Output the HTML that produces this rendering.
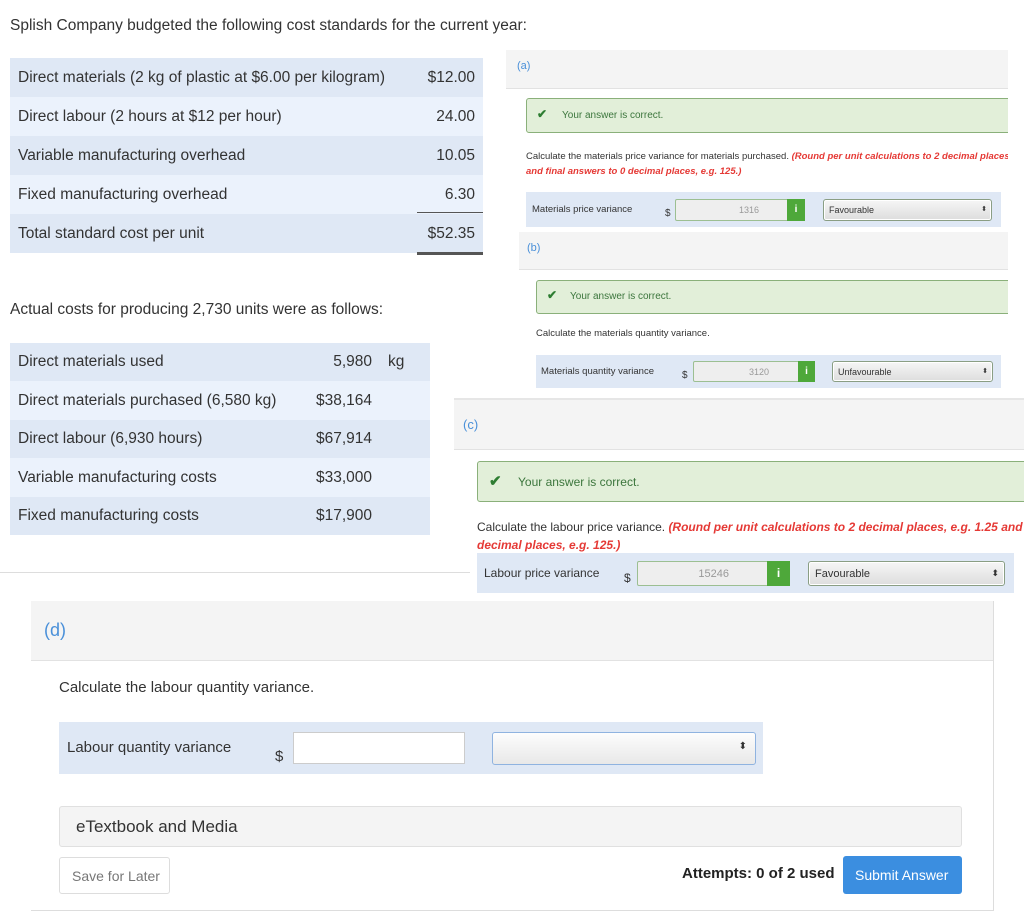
<!DOCTYPE html>
<html><head><meta charset="utf-8"><style>
*{margin:0;padding:0;box-sizing:border-box}
html,body{overflow:hidden}
body{width:1024px;height:919px;background:#fff;position:relative;overflow:hidden;font-family:"Liberation Sans",sans-serif;color:#333}
.a{position:absolute;white-space:nowrap}
.clip{position:absolute;overflow:hidden}
.d{background:#dfe8f5}.l{background:#ebf2fc}
.row .t{position:absolute;left:8px;top:50%;transform:translateY(-50%);font-size:15.5px;color:#333}
.row .v{position:absolute;top:50%;transform:translateY(-50%);font-size:15.5px;color:#333;text-align:right}
.panel{background:#f4f4f4;border-bottom:1px solid #e2e2e2}
.lbl{color:#4a90d9}
.ok{background:#e2efd9;border:1px solid #8ab07a;border-radius:3px;color:#3c763d}
.chk{color:#2e7d32;font-weight:bold}
.inp{background:#eee;border:1px solid #9cbf92;border-radius:2px}
.ibtn{background:#4ea83a;color:#fff;font-weight:bold;text-align:center}
.sel{border:1px solid #8a9e84;border-radius:3px;background:linear-gradient(#f6f6f6,#ddd);box-shadow:inset 0 0 0 1px #fff}
.red{color:#e53935;font-weight:bold;font-style:italic}
</style></head><body>
<div class="a" style="left:10px;top:17px;font-size:15.5px">Splish Company budgeted the following cost standards for the current year:</div>

<div class="a row d" style="left:10px;top:58px;width:473px;height:39px"><span class="t">Direct materials (2 kg of plastic at $6.00 per kilogram)</span><span class="v" style="right:8px">$12.00</span></div>
<div class="a row l" style="left:10px;top:97px;width:473px;height:39px"><span class="t">Direct labour (2 hours at $12 per hour)</span><span class="v" style="right:8px">24.00</span></div>
<div class="a row d" style="left:10px;top:136px;width:473px;height:39px"><span class="t">Variable manufacturing overhead</span><span class="v" style="right:8px">10.05</span></div>
<div class="a row l" style="left:10px;top:175px;width:473px;height:39px"><span class="t">Fixed manufacturing overhead</span><span class="v" style="right:8px">6.30</span></div>
<div class="a row d" style="left:10px;top:214px;width:473px;height:39px"><span class="t">Total standard cost per unit</span><span class="v" style="right:8px">$52.35</span></div>
<div class="a" style="left:417px;top:212px;width:66px;height:1px;background:#555"></div>
<div class="a" style="left:417px;top:252px;width:66px;height:3px;background:#555"></div>

<div class="a" style="left:10px;top:301px;font-size:15.5px">Actual costs for producing 2,730 units were as follows:</div>
<div class="a row d" style="left:10px;top:343px;width:420px;height:38px"><span class="t">Direct materials used</span><span class="v" style="right:58px">5,980</span><span class="v" style="left:378px">kg</span></div>
<div class="a row l" style="left:10px;top:381px;width:420px;height:39px"><span class="t">Direct materials purchased (6,580 kg)</span><span class="v" style="right:58px">$38,164</span></div>
<div class="a row d" style="left:10px;top:420px;width:420px;height:38px"><span class="t">Direct labour (6,930 hours)</span><span class="v" style="right:58px">$67,914</span></div>
<div class="a row l" style="left:10px;top:458px;width:420px;height:39px"><span class="t">Variable manufacturing costs</span><span class="v" style="right:58px">$33,000</span></div>
<div class="a row d" style="left:10px;top:497px;width:420px;height:38px"><span class="t">Fixed manufacturing costs</span><span class="v" style="right:58px">$17,900</span></div>
<div class="a" style="left:0;top:572px;width:470px;height:1px;background:#ddd"></div>

<!-- (a)/(b) clipped region -->
<div class="clip" style="left:500px;top:45px;width:508px;height:350px">
<div class="a panel" style="left:6px;top:5px;width:502px;height:39px"><span class="a lbl" style="left:11px;top:10px;font-size:11px">(a)</span></div>
<div class="a ok" style="left:26px;top:53px;width:500px;height:35px"><span class="a chk" style="left:10px;top:8px;font-size:12px">✔</span><span class="a" style="left:35px;top:11px;font-size:10px">Your answer is correct.</span></div>
<div class="a" style="left:26px;top:106px;font-size:9.5px">Calculate the materials price variance for materials purchased. <span class="red">(Round per unit calculations to 2 decimal places</span></div>
<div class="a red" style="left:26px;top:121px;font-size:9.5px">and final answers to 0 decimal places, e.g. 125.)</div>
<div class="a d" style="left:26px;top:147px;width:475px;height:35px"></div>
<div class="a" style="left:32px;top:159px;font-size:9.5px">Materials price variance</div>
<div class="a" style="left:165px;top:163px;font-size:10px">$</div>
<div class="a inp" style="left:175px;top:154px;width:130px;height:22px"><span class="a" style="right:45px;top:5px;font-size:9px;color:#999">1316</span></div>
<div class="a ibtn" style="left:287px;top:154px;width:18px;height:22px;font-size:10px;line-height:22px">i</div>
<div class="a sel" style="left:323px;top:154px;width:169px;height:22px"><span class="a" style="left:5px;top:5px;font-size:9px">Favourable</span><span class="a" style="right:4px;top:5px;font-size:7px">⬍</span></div>

<div class="a panel" style="left:19px;top:187px;width:489px;height:38px"><span class="a lbl" style="left:8px;top:10px;font-size:11px">(b)</span></div>
<div class="a ok" style="left:36px;top:235px;width:490px;height:34px"><span class="a chk" style="left:10px;top:7px;font-size:12px">✔</span><span class="a" style="left:33px;top:10px;font-size:10px">Your answer is correct.</span></div>
<div class="a" style="left:36px;top:283px;font-size:9.5px">Calculate the materials quantity variance.</div>
<div class="a d" style="left:36px;top:310px;width:465px;height:33px"></div>
<div class="a" style="left:41px;top:321px;font-size:9.5px">Materials quantity variance</div>
<div class="a" style="left:182px;top:325px;font-size:10px">$</div>
<div class="a inp" style="left:193px;top:316px;width:122px;height:21px"><span class="a" style="right:45px;top:5px;font-size:9px;color:#999">3120</span></div>
<div class="a ibtn" style="left:298px;top:316px;width:17px;height:21px;font-size:10px;line-height:21px">i</div>
<div class="a sel" style="left:332px;top:316px;width:161px;height:21px"><span class="a" style="left:5px;top:5px;font-size:9px">Unfavourable</span><span class="a" style="right:4px;top:5px;font-size:7px">⬍</span></div>
</div>

<!-- (c) clipped -->
<div class="clip" style="left:454px;top:398px;width:570px;height:200px">
<div class="a" style="left:0;top:0;width:570px;height:2px;background:#e6e6e6"></div>
<div class="a panel" style="left:0;top:2px;width:570px;height:50px"><span class="a lbl" style="left:9px;top:17px;font-size:13px">(c)</span></div>
<div class="a ok" style="left:23px;top:63px;width:560px;height:41px"><span class="a chk" style="left:11px;top:10px;font-size:15px">✔</span><span class="a" style="left:40px;top:13px;font-size:12px">Your answer is correct.</span></div>
<div class="a" style="left:23px;top:122px;font-size:12px">Calculate the labour price variance. <span class="red">(Round per unit calculations to 2 decimal places, e.g. 1.25 and final answers to 0</span></div>
<div class="a red" style="left:23px;top:140px;font-size:12px">decimal places, e.g. 125.)</div>
<div class="a d" style="left:23px;top:155px;width:537px;height:40px"></div>
<div class="a" style="left:30px;top:168px;font-size:12px">Labour price variance</div>
<div class="a" style="left:170px;top:173px;font-size:12px">$</div>
<div class="a inp" style="left:183px;top:163px;width:153px;height:25px"><span class="a" style="right:60px;top:6px;font-size:11px;color:#999">15246</span></div>
<div class="a ibtn" style="left:313px;top:163px;width:23px;height:25px;font-size:12px;line-height:25px">i</div>
<div class="a sel" style="left:354px;top:163px;width:197px;height:25px"><span class="a" style="left:6px;top:6px;font-size:11px">Favourable</span><span class="a" style="right:5px;top:6px;font-size:9px">⬍</span></div>
</div>

<!-- (d) -->
<div class="a panel" style="left:31px;top:601px;width:963px;height:60px"><span class="a lbl" style="left:13px;top:19px;font-size:18px">(d)</span></div>
<div class="a" style="left:993px;top:601px;width:1px;height:310px;background:#ddd"></div>
<div class="a" style="left:31px;top:910px;width:963px;height:1px;background:#ddd"></div>
<div class="a" style="left:59px;top:679px;font-size:15px">Calculate the labour quantity variance.</div>
<div class="a d" style="left:59px;top:722px;width:704px;height:52px"></div>
<div class="a" style="left:67px;top:739px;font-size:15px">Labour quantity variance</div>
<div class="a" style="left:275px;top:748px;font-size:15px">$</div>
<div class="a" style="left:293px;top:732px;width:172px;height:32px;background:#fff;border:1px solid #ccc"></div>
<div class="a" style="left:492px;top:732px;width:264px;height:33px;border:1px solid #8fb3e0;border-radius:3px;background:linear-gradient(#fdfdfd,#e8e8e8)"><span class="a" style="right:8px;top:8px;font-size:10px">⬍</span></div>
<div class="a" style="left:59px;top:806px;width:903px;height:41px;background:#f4f4f4;border:1px solid #e0e0e0;border-radius:3px"><span class="a" style="left:16px;top:10px;font-size:17px">eTextbook and Media</span></div>
<div class="a" style="left:59px;top:857px;width:111px;height:37px;border:1px solid #ddd;border-radius:3px;background:#fff"><span class="a" style="left:12px;top:10px;font-size:14px;color:#777">Save for Later</span></div>
<div class="a" style="left:682px;top:865px;font-size:15px;font-weight:bold;color:#222">Attempts: 0 of 2 used</div>
<div class="a" style="left:843px;top:856px;width:119px;height:38px;background:#3b8ee0;border-radius:3px"><span class="a" style="left:12px;top:11px;font-size:14px;color:#fff">Submit Answer</span></div>
</body></html>
